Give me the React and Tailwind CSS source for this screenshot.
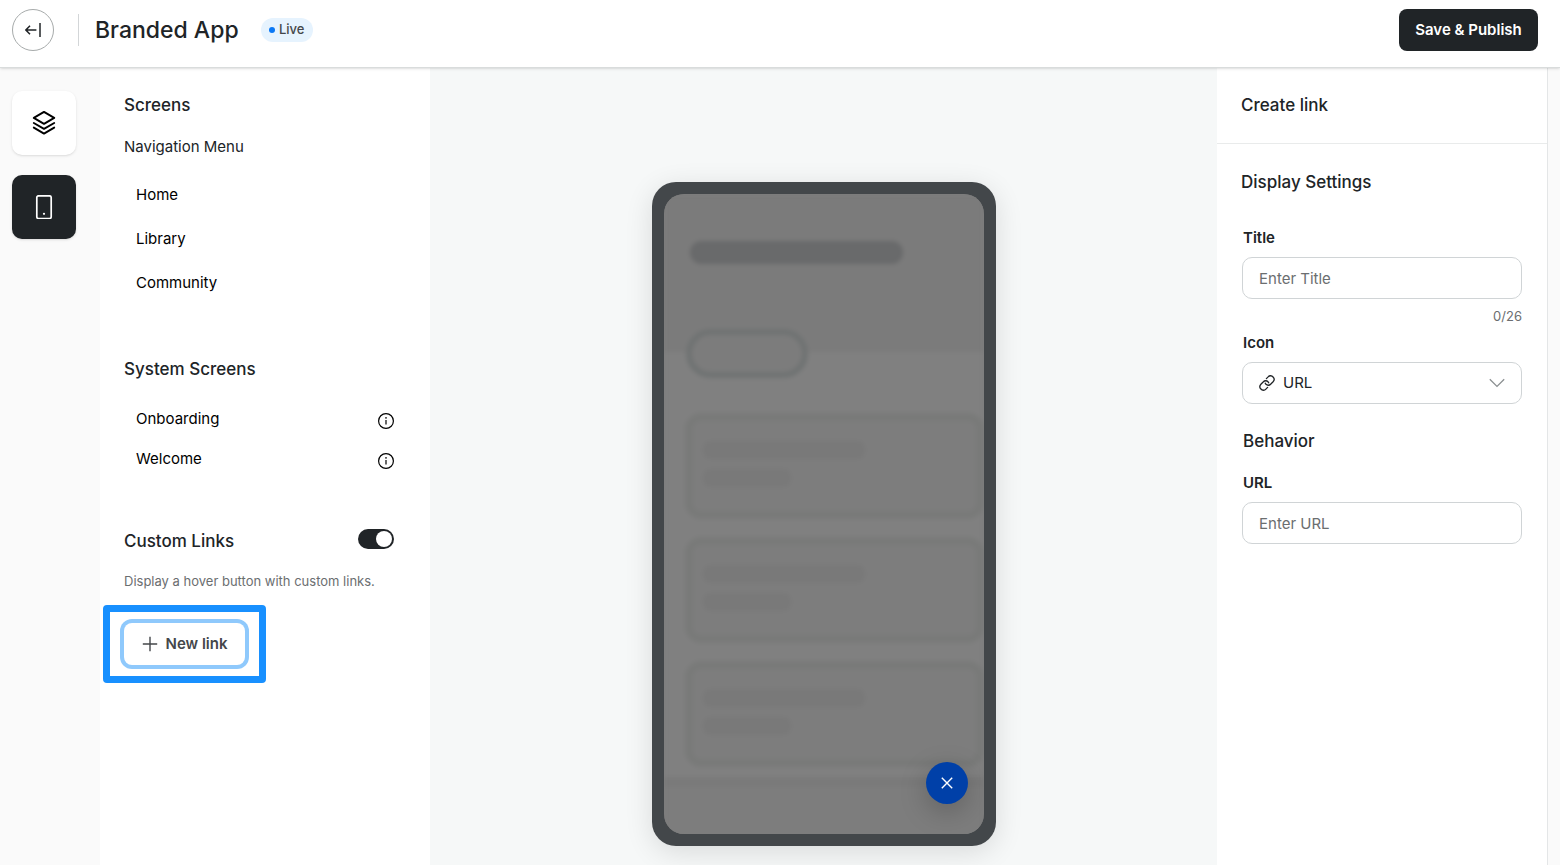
import { useState } from 'react'

const NAV_SCREENS = ['Home', 'Library', 'Community']
const SYSTEM_SCREENS = ['Onboarding', 'Welcome']
const PREVIEW_CARDS = [1, 2, 3]
const TITLE_LIMIT = 26

function BackIcon() {
  return (
    <svg className="w-4 h-4" viewBox="0 0 16 16" fill="none" stroke="currentColor" strokeWidth="1.5">
      <path d="M11.4 8H1.2M5 3.8.9 8 5 12.2" />
      <path d="M15 1v14" />
    </svg>
  )
}

function LayersIcon() {
  return (
    <svg className="w-6 h-6" viewBox="0 0 24 24" fill="none" stroke="currentColor" strokeWidth="1.9" strokeLinejoin="round" strokeLinecap="round">
      <path d="M12 .9 22.2 6.9 12 12.9 1.8 6.9Z" />
      <path d="M1.8 12 12 17.8 22.2 12" />
      <path d="M1.8 16.6 12 22.6l10.2-6" />
    </svg>
  )
}

function PhoneIcon() {
  return (
    <svg className="w-6 h-6" viewBox="0 0 24 24" fill="none" stroke="currentColor" strokeWidth="1.7">
      <rect x="4.8" y="0.8" width="14.4" height="22.8" rx="1.8" />
      <circle cx="12" cy="18.8" r="1.1" fill="currentColor" stroke="none" />
    </svg>
  )
}

function InfoIcon() {
  return (
    <svg className="w-4 h-4" viewBox="0 0 16 16" fill="none" stroke="currentColor" strokeWidth="1.2">
      <circle cx="8" cy="8" r="7.4" />
      <path d="M8 7v4.6" />
      <circle cx="8" cy="4.9" r="0.8" fill="currentColor" stroke="none" />
    </svg>
  )
}

function PlusIcon() {
  return (
    <svg className="w-4 h-4" viewBox="0 0 16 16" fill="none" stroke="currentColor" strokeWidth="1.4">
      <path d="M8 .8v14.4M.8 8h14.4" />
    </svg>
  )
}

function LinkIcon({ className }) {
  return (
    <svg className={className} viewBox="0 0 16 16" fill="none" stroke="currentColor" strokeWidth="1.3" strokeLinecap="round">
      <path d="m7.4 3.6 1.7-1.7a3.2 3.2 0 0 1 5 .1 3.4 3.4 0 0 1 0 4.7l-2.5 2.5a3.2 3.2 0 0 1-4.6.1 3 3 0 0 1-.7-1.1" />
      <path d="m8.6 12.4-1.7 1.7a3.2 3.2 0 0 1-5-.1 3.4 3.4 0 0 1 0-4.7l2.5-2.5A3.2 3.2 0 0 1 9 6.7a3 3 0 0 1 .7 1.1" />
    </svg>
  )
}

function Header() {
  return (
    <header className="relative z-10 flex items-start h-[68px] pt-[9px] pl-3 pr-[22px] bg-white border-b border-[#d9dcdc] shadow-sm">
      <div className="flex items-center">
        <button
          type="button"
          aria-label="Back"
          className="flex items-center justify-center w-[42px] h-[42px] rounded-full border border-[#a7abab]"
        >
          <BackIcon />
        </button>
        <div className="w-px h-8 ml-6 mr-4 bg-[#d3d6d8]" />
        <h1 className="text-[23px] leading-8 font-medium">Branded App</h1>
        <span className="flex items-center justify-center gap-1 w-[52px] h-6 ml-[22px] rounded-full bg-[#e6f3fe] text-[13px] font-medium text-[#44474a]">
          <span className="w-[6px] h-[6px] rounded-full bg-[#0a78f5]" />
          Live
        </span>
      </div>
      <button type="button" className="ml-auto w-[139px] h-[42px] rounded-lg bg-[#202427] text-white text-[15px] font-semibold">
        Save &amp; Publish
      </button>
    </header>
  )
}

function Rail() {
  return (
    <nav className="flex flex-col gap-5 w-[100px] shrink-0 pt-[23px] pl-3 bg-[#fafafa]">
      <button type="button" aria-label="Layers" className="flex items-center justify-center w-16 h-16 rounded-[10px] bg-white text-black shadow">
        <LayersIcon />
      </button>
      <button type="button" aria-label="Mobile app" className="flex items-center justify-center w-16 h-16 rounded-[10px] bg-[#202427] text-white shadow">
        <PhoneIcon />
      </button>
    </nav>
  )
}

function ScreensPanel() {
  const [linksOn, setLinksOn] = useState(true)

  return (
    <aside className="w-[330px] shrink-0 pt-[23px] pl-6 pr-9 bg-white">
      <h2 className="text-[17px] leading-7 font-medium">Screens</h2>
      <h3 className="mt-4 text-[15px] leading-6">Navigation Menu</h3>
      <ul className="mt-[14px] pl-3 text-[15px] text-black">
        {NAV_SCREENS.map((name) => (
          <li key={name} className="flex items-center h-11">
            <a href="#">{name}</a>
          </li>
        ))}
      </ul>

      <h2 className="mt-[50px] text-[17px] leading-7 font-medium">System Screens</h2>
      <ul className="mt-4 pl-3 text-[15px] text-black">
        {SYSTEM_SCREENS.map((name) => (
          <li key={name} className="flex items-center justify-between h-10">
            <a href="#">{name}</a>
            <button type="button" aria-label={`About ${name}`} className="pt-1">
              <InfoIcon />
            </button>
          </li>
        ))}
      </ul>

      {/* Custom links */}
      <div className="flex items-start justify-between mt-12">
        <label htmlFor="custom-links" className="text-[17px] leading-7 font-medium">Custom Links</label>
        <input
          id="custom-links"
          type="checkbox"
          role="switch"
          checked={linksOn}
          onChange={(e) => setLinksOn(e.target.checked)}
          className="appearance-none flex items-center w-9 h-5 mt-[2px] px-[2px] rounded-full bg-[#b5b9bb] checked:bg-[#202427] checked:justify-end before:w-4 before:h-4 before:rounded-full before:bg-white"
        />
      </div>
      <p className="mt-4 text-[13px] leading-5 text-[#6b6e70]">Display a hover button with custom links.</p>
      <div className="relative w-[121px] mt-8">
        <button
          type="button"
          className="flex items-center justify-center gap-2 w-full h-[42px] rounded-lg bg-white ring-4 ring-[#8fc9fc] text-[15px] font-semibold text-[#44474a]"
        >
          <PlusIcon />
          New link
        </button>
        <div className="absolute -inset-x-[21px] -inset-y-[18px] border-[7px] border-[#1890ff] rounded pointer-events-none" />
      </div>
    </aside>
  )
}

function PhonePreview() {
  return (
    <div className="w-[344px] h-[664px] p-3 rounded-3xl bg-[#43474a] shadow-[0_6px_28px_rgba(0,0,0,0.12)]">
      <div className="relative h-full rounded-[20px] overflow-hidden bg-[#7e7e7e]">
        {/* Dimmed skeleton of the app home screen */}
        <div className="h-full bg-[#808080] blur-[2px]">
          <div className="h-[158px] pt-[47px] pl-[26px] bg-[#7b7b7b]">
            <div className="w-[213px] h-[23px] rounded-full bg-[#696a6b]" />
          </div>
          <div className="w-[122px] h-[49px] -mt-[23px] ml-[22px] rounded-full border-[6px] border-[#707373] bg-[#7c7c7c]" />
          <div className="flex flex-col gap-[18px] mt-[35px] pl-[21px]">
            {PREVIEW_CARDS.map((card) => (
              <div key={card} className="flex flex-col gap-[10px] h-[106px] pt-[20px] pl-[10px] rounded-2xl border-[8px] border-[#797a79] bg-[#7d7d7d]">
                <div className="w-[162px] h-[18px] rounded-lg bg-[#797979]" />
                <div className="w-[88px] h-[18px] rounded-lg bg-[#797979]" />
              </div>
            ))}
          </div>
          <div className="h-16 mt-[10px] border-t-[10px] border-[#7a7a7a] bg-[#7d7d7d]" />
        </div>

        <button
          type="button"
          aria-label="Close links"
          className="absolute right-4 bottom-[30px] flex items-center justify-center w-[42px] h-[42px] rounded-full bg-[#0040a8] text-white shadow-[0_8px_28px_rgba(0,0,0,0.22)]"
        >
          <svg className="w-3 h-3" viewBox="0 0 12 12" fill="none" stroke="currentColor" strokeWidth="1.4">
            <path d="m.8.8 10.4 10.4M11.2.8.8 11.2" />
          </svg>
        </button>
      </div>
    </div>
  )
}

function LinkForm() {
  const [title, setTitle] = useState('')
  const [url, setUrl] = useState('')
  const [icon, setIcon] = useState('url')

  return (
    <aside className="w-[331px] shrink-0 bg-white border-r border-[#e4e6e7]">
      <div className="h-[76px] pt-[23px] px-6 border-b border-[#e9ebeb]">
        <h2 className="text-[17px] leading-7 font-medium">Create link</h2>
      </div>
      <form className="pt-6 px-6" onSubmit={(e) => e.preventDefault()}>
        <h2 className="text-[17px] leading-7 font-medium">Display Settings</h2>
        <div className="flex flex-col mt-[31px] px-px">
          <label htmlFor="link-title" className="pl-px text-[15px] leading-[22px] font-semibold">Title</label>
          <input
            id="link-title"
            type="text"
            maxLength={TITLE_LIMIT}
            value={title}
            onChange={(e) => setTitle(e.target.value)}
            placeholder="Enter Title"
            className="w-full h-[42px] mt-2 px-4 rounded-[10px] border border-[#d0d4d6] text-[15px] placeholder:text-[#6b6e70] outline-none"
          />
          <p className="mt-2 text-right text-[13px] leading-[18px] text-[#6b6e70]">{title.length}/{TITLE_LIMIT}</p>

          <label htmlFor="link-icon" className="mt-[7px] pl-px text-[15px] leading-[22px] font-semibold">Icon</label>
          <div className="relative mt-2">
            <LinkIcon className="absolute left-[17px] top-[13px] w-4 h-4 pointer-events-none" />
            <select
              id="link-icon"
              value={icon}
              onChange={(e) => setIcon(e.target.value)}
              className="appearance-none w-full h-[42px] pl-10 pr-10 rounded-[10px] border border-[#d0d4d6] bg-transparent text-[15px] outline-none"
            >
              <option value="url">URL</option>
            </select>
            <svg className="absolute right-[17px] top-[13px] w-4 h-4 text-[#8b8f91] pointer-events-none" viewBox="0 0 16 16" fill="none" stroke="currentColor" strokeWidth="1.3">
              <path d="m.8 4.2 7.2 7.2 7.2-7.2" />
            </svg>
          </div>

          <h2 className="mt-[23px] pl-px text-[17px] leading-7 font-medium">Behavior</h2>
          <label htmlFor="link-url" className="mt-[17px] pl-px text-[15px] leading-[22px] font-semibold">URL</label>
          <input
            id="link-url"
            type="text"
            value={url}
            onChange={(e) => setUrl(e.target.value)}
            placeholder="Enter URL"
            className="w-full h-[42px] mt-2 px-4 rounded-[10px] border border-[#d0d4d6] text-[15px] placeholder:text-[#6b6e70] outline-none"
          />
        </div>
      </form>
    </aside>
  )
}

export default function App() {
  return (
    <div className="flex flex-col min-h-screen bg-[#fafafa] font-['Inter',sans-serif] text-[#202427]">
      <Header />
      <div className="flex flex-1 pr-3">
        <Rail />
        <ScreensPanel />
        <main className="flex flex-1 justify-center items-start pt-[114px] pb-[19px] bg-[#f6f8f8]">
          <PhonePreview />
        </main>
        <LinkForm />
      </div>
    </div>
  )
}
